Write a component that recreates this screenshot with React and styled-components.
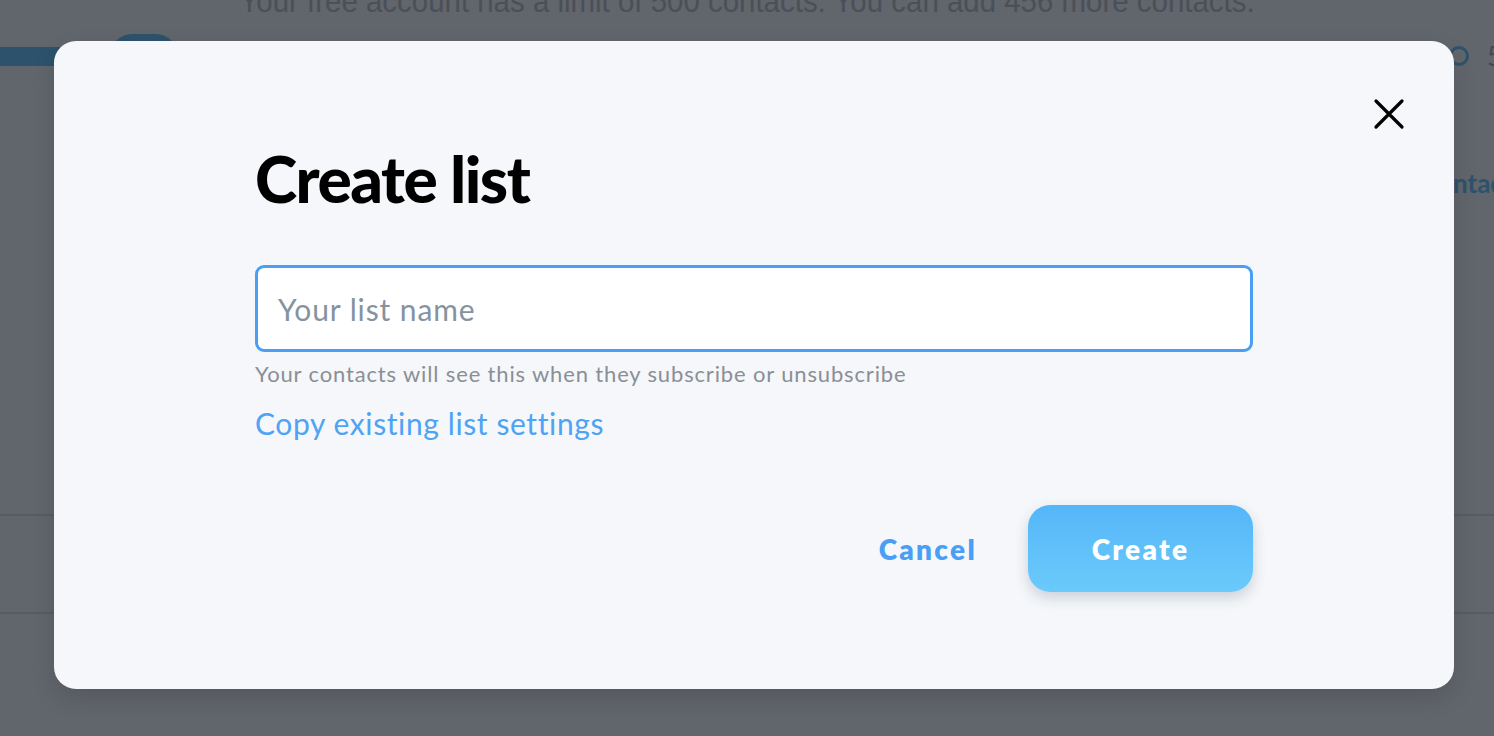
import React from 'react'
import styled, { createGlobalStyle } from 'styled-components'

const GlobalStyle = createGlobalStyle`
  html, body {
    margin: 0;
    padding: 0;
    width: 100%;
    height: 100%;
    overflow: hidden;
    background: #ffffff;
  }
  #root {
    height: 100%;
  }
`

const font = `Lato, "Open Sans", "Liberation Sans", sans-serif`
const brand = '#50befc'

/* -- Page behind the dialog -- */

const Page = styled.div`
  position: relative;
  height: 736px;
  font-family: ${font};
  overflow: hidden;
`

const Notice = styled.p`
  margin: -17px 0 0;
  text-align: center;
  font-family: "Liberation Sans", sans-serif;
  font-size: 32px;
  line-height: 36px;
  color: #b4b6ba;
  transform: scaleX(0.92);
`

const TopBar = styled.div`
  display: flex;
  align-items: center;
  height: 48px;
  margin-top: 13px;
`

const Progress = styled.div`
  width: 120px;
  height: 19px;
  background: ${brand};
`

const Pill = styled.div`
  width: 68px;
  height: 44px;
  margin-left: -10px;
  border-radius: 22px;
  background: ${brand};
`

const Counter = styled.div`
  margin-left: auto;
  display: flex;
  align-items: center;
  gap: 18px;
  color: #9ea1a6;
  font-size: 26px;
  margin-right: -8px;
`

const Ring = styled.span`
  width: 14px;
  height: 14px;
  border: 3px solid ${brand};
  border-radius: 50%;
`

const SideLink = styled.div`
  text-align: right;
  margin-top: 87px;
  margin-right: -30px;
  color: ${brand};
  font-weight: 700;
  font-size: 26px;
`

const Rule = styled.hr`
  margin: 0;
  border: 0;
  border-top: 2px solid #dcdde0;
`

const Rules = styled.div`
  display: flex;
  flex-direction: column;
  gap: 96px;
  margin-top: 315px;
`

/* -- Overlay & dialog -- */

const Overlay = styled.div`
  position: absolute;
  inset: 0;
  background: rgba(30, 35, 45, 0.7);
`

const Dialog = styled.div`
  position: absolute;
  left: 54px;
  top: 41px;
  width: 1400px;
  height: 648px;
  box-sizing: border-box;
  padding: 104px 201px 0 201px;
  background: #f5f7fa;
  border-radius: 22px;
  box-shadow: 0 10px 24px rgba(0, 0, 0, 0.12);
  display: flex;
  flex-direction: column;
`

const Close = styled.button`
  position: absolute;
  top: 57px;
  right: 49px;
  width: 32px;
  height: 32px;
  padding: 0;
  border: 0;
  background: none;
  cursor: pointer;
`

const Title = styled.h1`
  margin: 0;
  font-family: ${font};
  font-weight: 900;
  font-size: 64px;
  line-height: 68px;
  letter-spacing: -1.5px;
  color: #000;
`

const Input = styled.input`
  margin-top: 52px;
  height: 87px;
  box-sizing: border-box;
  border: 3px solid #4a9ff5;
  border-radius: 9px;
  background: #fff;
  padding: 0 20px;
  font-family: ${font};
  font-size: 30px;
  letter-spacing: 0.9px;
  color: #333;
  outline: none;

  &::placeholder {
    color: #8593a1;
  }
`

const Hint = styled.div`
  margin-top: 8px;
  font-size: 22px;
  line-height: 28px;
  color: #8a8f96;
  letter-spacing: 0.85px;
`

const CopyLink = styled.a`
  align-self: flex-start;
  margin-top: 15px;
  font-size: 30px;
  line-height: 40px;
  letter-spacing: 0.6px;
  color: #4ea3f5;
  text-decoration: none;
  cursor: pointer;
`

const Actions = styled.div`
  display: flex;
  justify-content: flex-end;
  align-items: center;
  gap: 51px;
  margin-top: 62px;
`

const TextButton = styled.button`
  border: 0;
  background: none;
  padding: 0;
  font-family: ${font};
  font-weight: 800;
  font-size: 28px;
  letter-spacing: 2.3px;
  color: #4a9ff5;
  cursor: pointer;
`

const PrimaryButton = styled.button`
  width: 225px;
  height: 87px;
  border: 0;
  border-radius: 22px;
  background: linear-gradient(180deg, #55b6f8 0%, #6bcafb 100%);
  box-shadow: 0 6px 14px rgba(40, 60, 90, 0.2);
  font-family: ${font};
  font-weight: 800;
  font-size: 28px;
  letter-spacing: 2.3px;
  color: #fff;
  cursor: pointer;
`

const CloseIcon = () => (
  <svg width="32" height="32" viewBox="0 0 32 32" fill="none">
    <path d="M3 3L29 29M29 3L3 29" stroke="#000" strokeWidth="3.2" strokeLinecap="round" />
  </svg>
)

export default function App() {
  return (
    <>
      <GlobalStyle />
      <Page>
        <Notice>Your free account has a limit of 500 contacts. You can add 456 more contacts.</Notice>
        <TopBar>
          <Progress />
          <Pill />
          <Counter>
            <Ring />
            <span>5</span>
          </Counter>
        </TopBar>
        <SideLink>contacts</SideLink>
        <Rules>
          <Rule />
          <Rule />
        </Rules>

        <Overlay />

        <Dialog>
          <Close aria-label="Close">
            <CloseIcon />
          </Close>
          <Title>Create list</Title>
          <Input placeholder="Your list name" />
          <Hint>Your contacts will see this when they subscribe or unsubscribe</Hint>
          <CopyLink>Copy existing list settings</CopyLink>
          <Actions>
            <TextButton>Cancel</TextButton>
            <PrimaryButton>Create</PrimaryButton>
          </Actions>
        </Dialog>
      </Page>
    </>
  )
}
